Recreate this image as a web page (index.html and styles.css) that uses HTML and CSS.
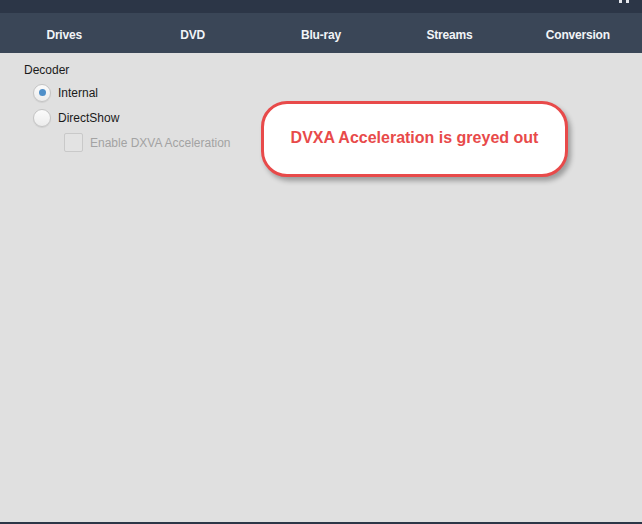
FILE: index.html
```html
<!DOCTYPE html>
<html lang="en">
<head>
    <meta charset="UTF-8">
    <title>Settings</title>
    <link rel="stylesheet" href="styles.css">
</head>
<body>
    <div class="titlebar"><span class="grip"></span></div>
    <div class="tabs">
        <div class="tab">Drives</div>
        <div class="tab">DVD</div>
        <div class="tab">Blu-ray</div>
        <div class="tab">Streams</div>
        <div class="tab">Conversion</div>
    </div>
    <div class="content">
        <div class="group-title">Decoder</div>
        <div class="option">
            <span class="radio checked"></span>
            <span>Internal</span>
        </div>
        <div class="option">
            <span class="radio"></span>
            <span>DirectShow</span>
        </div>
        <div class="option sub disabled">
            <span class="checkbox"></span>
            <span>Enable DXVA Acceleration</span>
        </div>
        <div class="callout">DVXA Acceleration is greyed out</div>
    </div>
    <div class="bottom"></div>
</body>
</html>
```

FILE: styles.css
```css
* {
    margin: 0;
    padding: 0;
    box-sizing: border-box;
}
body {
    width: 642px;
    height: 524px;
    display: flex;
    flex-direction: column;
    background: #e0e0e0;
    font-family: "Liberation Sans", Arial, sans-serif;
    overflow: hidden;
}
.titlebar {
    height: 13px;
    background: #2c3647;
    position: relative;
}
.grip {
    position: absolute;
    right: 13px;
    top: 0;
    width: 10px;
    height: 3px;
    border-left: 3px solid #e6e9ee;
    border-right: 3px solid #e6e9ee;
}
.tabs {
    height: 40px;
    background: #3a4657;
    display: grid;
    grid-template-columns: repeat(5, 1fr);
    align-items: center;
}
.tab {
    text-align: center;
    color: #f2f4f7;
    font-weight: bold;
    font-size: 12px;
    letter-spacing: -0.2px;
    padding-top: 4px;
}
.content {
    flex: 1;
    position: relative;
    padding: 10px 0 0 24px;
    font-size: 12px;
    color: #1a1a1a;
}
.group-title {
    height: 17px;
    margin-bottom: 0;
}
.option {
    display: flex;
    align-items: center;
    gap: 7px;
    height: 25px;
    margin-left: 9px;
}
.option.sub {
    margin-left: 40px;
    gap: 7px;
}
.disabled {
    color: #a3a3a3;
}
.radio {
    width: 18px;
    height: 18px;
    border-radius: 50%;
    border: 1px solid #c4c4c4;
    background: linear-gradient(#fbfbfb, #ececec);
    display: flex;
    align-items: center;
    justify-content: center;
    box-shadow: 0 1px 1px rgba(0, 0, 0, 0.08);
}
.radio.checked::after {
    content: "";
    width: 7px;
    height: 7px;
    border-radius: 50%;
    background: #4f8fc9;
}
.checkbox {
    width: 19px;
    height: 19px;
    border: 1px solid #c9c9c9;
    border-radius: 2px;
    background: #e3e3e3;
}
.callout {
    position: absolute;
    left: 261px;
    top: 48px;
    width: 307px;
    height: 76px;
    border: 3px solid #e84a4a;
    border-radius: 26px;
    background: #fff;
    color: #e84a4a;
    font-weight: bold;
    font-size: 16px;
    display: flex;
    align-items: center;
    justify-content: center;
    padding-bottom: 3px;
    box-shadow: 3px 4px 5px rgba(0, 0, 0, 0.3);
}
.bottom {
    height: 2px;
    background: #2c3647;
}
```
